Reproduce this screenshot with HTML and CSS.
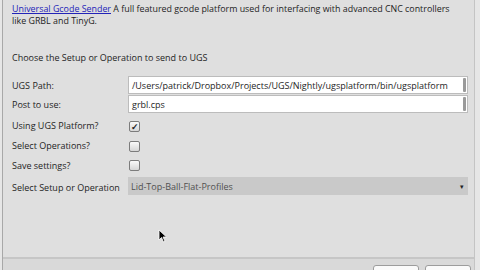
FILE: index.html
```html
<!DOCTYPE html>
<html lang="en">

<head>
    <meta charset="UTF-8" />
    <title>UGS Post</title>
    <link rel="stylesheet" href="styles.css">
</head>

<body>
    <div class="dialog">
        <div class="panel">
            <p class="intro">
                <a href="#">Universal Gcode Sender</a> A full featured gcode platform used for interfacing with advanced CNC controllers like GRBL and TinyG.
            </p>

            <p class="heading">Choose the Setup or Operation to send to UGS</p>

            <div class="form">
                <label>UGS Path:</label>
                <div class="field">
                    <span class="text">/Users/patrick/Dropbox/Projects/UGS/Nightly/ugsplatform/bin/ugsplatform</span>
                    <span class="grip"></span>
                </div>

                <label>Post to use:</label>
                <div class="field">
                    <span class="text">grbl.cps</span>
                    <span class="grip"></span>
                </div>

                <label>Using UGS Platform?</label>
                <div><span class="check checked">&#10003;</span></div>

                <label>Select Operations?</label>
                <div><span class="check"></span></div>

                <label>Save settings?</label>
                <div><span class="check"></span></div>

                <label>Select Setup or Operation</label>
                <div class="select">
                    <span>Lid-Top-Ball-Flat-Profiles</span>
                    <span class="arrow">&#9662;</span>
                </div>
            </div>

            <svg class="cursor" width="10" height="14" viewBox="0 0 10 14">
                <path d="M1 1 L1 11 L3.5 8.5 L5.5 13 L7 12.3 L5 8 L8.5 8 Z" fill="#000" stroke="#fff" stroke-width="0.8" />
            </svg>
        </div>

        <div class="footer">
            <button>POST</button>
            <button>Cancel</button>
        </div>
    </div>
</body>

</html>
```

FILE: styles.css
```css
body {
    margin: 0;
    width: 480px;
    height: 270px;
    overflow: hidden;
    background: #e6e6e6;
    font-family: "Open Sans", sans-serif;
    font-size: 9px;
    color: #1e1e1e;
}

.dialog {
    width: 471px;
    height: 270px;
    margin-left: 2px;
    border-left: 1px solid #a8a8a8;
    border-right: 1px solid #c4c4c4;
    background: #dfdfdf;
    display: flex;
    flex-direction: column;
}

.panel {
    position: relative;
    flex: 1;
    padding: 3px 0 0 9px;
}

.intro {
    margin: 0;
    line-height: 12px;
    width: 450px;
    font-size: 8.9px;
}

.intro a {
    color: #2323b8;
}

.heading {
    margin: 25px 0 0;
    line-height: 12px;
}

.form {
    display: grid;
    grid-template-columns: 116px 340px;
    grid-template-rows: 19px 19px 24px 16px 23px 21px;
    margin-top: 12px;
    align-items: center;
}

.form label {
    line-height: 18px;
}

.field {
    align-self: start;
    height: 16px;
    background: #fff;
    border: 1px solid #bcbcbc;
    display: flex;
    align-items: center;
    padding-left: 3px;
}

.field .text {
    flex: 1;
}

.grip {
    width: 3px;
    height: 14px;
    margin-right: 1px;
    background: #9a9a9a;
    border-radius: 1px;
}

.check {
    display: block;
    width: 9px;
    height: 9px;
    margin-left: 1px;
    border: 1px solid #7c7c7c;
    border-radius: 2px;
    background: linear-gradient(#fafafa, #d6d6d6);
    font-size: 9px;
    font-weight: bold;
    line-height: 9px;
    text-align: center;
    color: #222;
}

.select {
    align-self: start;
    height: 18px;
    background: #c9c9c9;
    display: flex;
    align-items: center;
    justify-content: space-between;
    padding: 0 4px 0 3px;
    color: #505050;
}

.select .arrow {
    font-size: 7px;
    color: #222;
}

.cursor {
    position: absolute;
    left: 155px;
    top: 229px;
}

.footer {
    height: 5px;
    border-top: 2px solid #c6c6c6;
    background: #d9d9d9;
    display: flex;
    justify-content: flex-end;
    gap: 6px;
    padding: 6px 3px 0 0;
}

.footer button {
    flex-shrink: 0;
    width: 46px;
    height: 16px;
    padding: 0;
    border: 1px solid #9c9c9c;
    border-radius: 3px;
    background: #fafafa;
    font-family: "Open Sans", sans-serif;
    font-size: 8px;
    line-height: 10px;
}
```
